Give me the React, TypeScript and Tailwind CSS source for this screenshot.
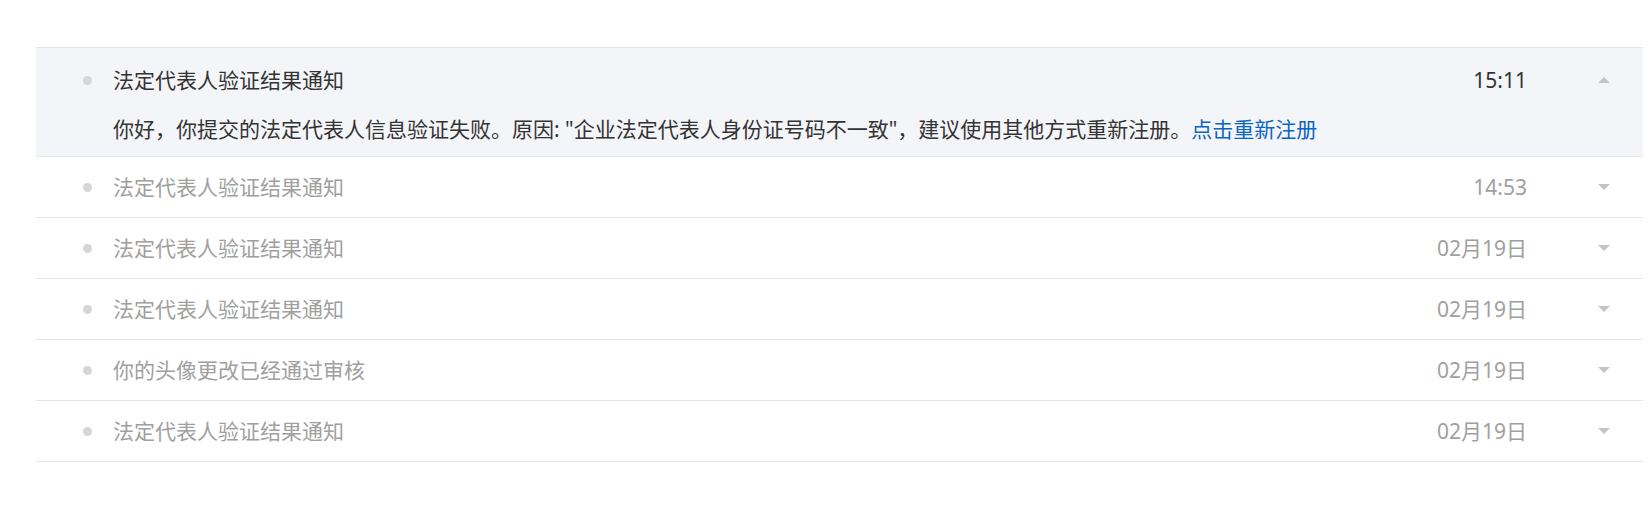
import React, { useState } from 'react';

interface Message {
  id: number;
  title: string;
  time: string;
  read: boolean;
}

const messages: Message[] = [
  { id: 1, title: '法定代表人验证结果通知', time: '15:11', read: false },
  { id: 2, title: '法定代表人验证结果通知', time: '14:53', read: true },
  { id: 3, title: '法定代表人验证结果通知', time: '02月19日', read: true },
  { id: 4, title: '法定代表人验证结果通知', time: '02月19日', read: true },
  { id: 5, title: '你的头像更改已经通过审核', time: '02月19日', read: true },
  { id: 6, title: '法定代表人验证结果通知', time: '02月19日', read: true },
];

const Caret = ({ up }: { up: boolean }) => (
  <svg width="12" height="6" viewBox="0 0 12 6" className="block">
    {up ? <polygon points="0,6 6,0 12,6" fill="#c4c4c4" /> : <polygon points="0,0 12,0 6,6" fill="#c4c4c4" />}
  </svg>
);

const App = () => {
  const [openId, setOpenId] = useState<number | null>(1);

  return (
    <div
      className="min-h-screen bg-white pt-[47px] pl-[36px] pr-[8px]"
      style={{ fontFamily: '"Noto Sans", "Noto Sans CJK SC", sans-serif' }}
    >
      <ul className="border-t border-[#e6e6e6]">
        {messages.map((m) => {
          const open = openId === m.id;
          return (
            <li
              key={m.id}
              onClick={() => setOpenId(open ? null : m.id)}
              className={`border-b border-[#e6e6e6] cursor-pointer ${open ? 'bg-[#f4f5f9] pt-[18px] pb-[13px]' : 'bg-white py-[16px]'}`}
            >
              <div className="flex items-center h-[28px] text-[21px] leading-[28px]">
                <span className="ml-[47px] w-[9px] h-[9px] rounded-full bg-[#d6d6d6] shrink-0" />
                <span className={`ml-[21px] flex-1 ${m.read ? 'text-[#a0a0a0]' : 'text-[#333333]'}`}>{m.title}</span>
                <span className={`${m.read ? 'text-[#a0a0a0]' : 'text-[#333333]'} text-[21px]`}>{m.time}</span>
                <span className="ml-[71px] mr-[33px] w-[12px] flex justify-center">
                  <Caret up={open} />
                </span>
              </div>
              {open && (
                <p className="mt-[21px] ml-[77px] text-[21px] leading-[28px] text-[#333333]">
                  你好，你提交的法定代表人信息验证失败。原因: "企业法定代表人身份证号码不一致"，建议使用其他方式重新注册。
                  <a className="text-[#0a66c2]">点击重新注册</a>
                </p>
              )}
            </li>
          );
        })}
      </ul>
    </div>
  );
};

export default App;
